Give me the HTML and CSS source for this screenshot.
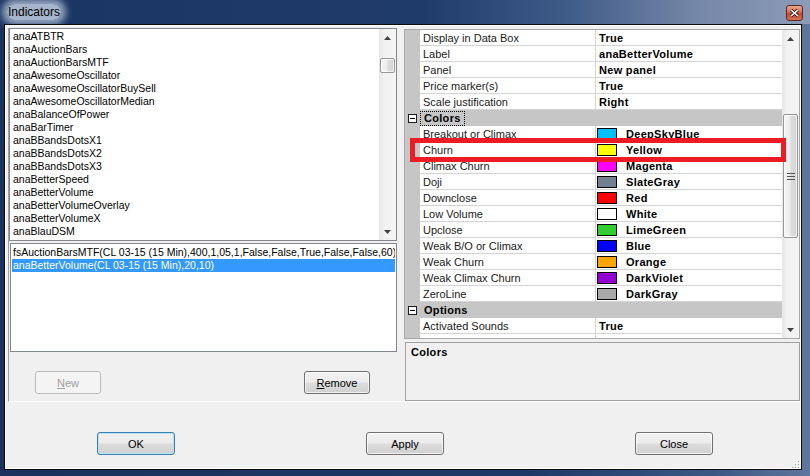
FILE: index.html
```html
<!DOCTYPE html>
<html lang="en">
<head>
    <meta charset="UTF-8">
    <meta name="viewport" content="width=device-width, initial-scale=1.0">
    <title>Indicators</title>
    <link rel="stylesheet" href="styles.css">
</head>
<body>

<div class="window">
    <div class="titlebar">
        <span class="caption">Indicators</span>
        <span class="close-box">
            <svg width="11" height="10" viewBox="0 0 11 10">
                <path d="M2 2l7 6M9 2L2 8" stroke="#3a1a14" stroke-width="3.2"/>
                <path d="M2 2l7 6M9 2L2 8" stroke="#fff" stroke-width="1.6"/>
            </svg>
        </span>
    </div>

    <div class="frame">
        <div class="client">
            <div class="split">

                <!-- Indicator catalogue and the indicators on the chart -->
                <div class="left-pane">
                    <div class="listbox available">
                        <ul class="items">
                            <li>anaATBTR</li>
                            <li>anaAuctionBars</li>
                            <li>anaAuctionBarsMTF</li>
                            <li>anaAwesomeOscillator</li>
                            <li>anaAwesomeOscillatorBuySell</li>
                            <li>anaAwesomeOscillatorMedian</li>
                            <li>anaBalanceOfPower</li>
                            <li>anaBarTimer</li>
                            <li>anaBBandsDotsX1</li>
                            <li>anaBBandsDotsX2</li>
                            <li>anaBBandsDotsX3</li>
                            <li>anaBetterSpeed</li>
                            <li>anaBetterVolume</li>
                            <li>anaBetterVolumeOverlay</li>
                            <li>anaBetterVolumeX</li>
                            <li>anaBlauDSM</li>
                        </ul>
                        <div class="vscroll">
                            <span class="arrow"><svg width="7" height="4"><path d="M0 4h7L3.5 0z" fill="#404040"/></svg></span>
                            <div class="track"><div class="thumb list-thumb"></div></div>
                            <span class="arrow"><svg width="7" height="4"><path d="M0 0h7L3.5 4z" fill="#404040"/></svg></span>
                        </div>
                    </div>

                    <ul class="listbox applied">
                        <li>fsAuctionBarsMTF(CL 03-15 (15 Min),400,1,05,1,False,False,True,False,False,60)</li>
                        <li class="selected">anaBetterVolume(CL 03-15 (15 Min),20,10)</li>
                    </ul>

                    <div class="pane-actions">
                        <button class="btn" disabled><u>N</u>ew</button>
                        <button class="btn"><u>R</u>emove</button>
                    </div>
                </div>

                <!-- Properties of the selected indicator -->
                <div class="right-pane">
                    <div class="propgrid">
                        <div class="rows">
                            <div class="row"><span class="gutter"></span><span class="name">Display in Data Box</span><span class="value">True</span></div>
                            <div class="row"><span class="gutter"></span><span class="name">Label</span><span class="value">anaBetterVolume</span></div>
                            <div class="row"><span class="gutter"></span><span class="name">Panel</span><span class="value">New panel</span></div>
                            <div class="row"><span class="gutter"></span><span class="name">Price marker(s)</span><span class="value">True</span></div>
                            <div class="row"><span class="gutter"></span><span class="name">Scale justification</span><span class="value">Right</span></div>

                            <div class="row category"><span class="toggle"></span><span class="cat-name focused">Colors</span></div>
                            <div class="row"><span class="gutter"></span><span class="name">Breakout or Climax</span><span class="value"><i class="swatch sw-deepskyblue"></i>DeepSkyBlue</span></div>
                            <div class="row"><span class="gutter"></span><span class="name">Churn</span><span class="value"><i class="swatch sw-yellow"></i>Yellow</span></div>
                            <div class="row"><span class="gutter"></span><span class="name">Climax Churn</span><span class="value"><i class="swatch sw-magenta"></i>Magenta</span></div>
                            <div class="row"><span class="gutter"></span><span class="name">Doji</span><span class="value"><i class="swatch sw-slategray"></i>SlateGray</span></div>
                            <div class="row"><span class="gutter"></span><span class="name">Downclose</span><span class="value"><i class="swatch sw-red"></i>Red</span></div>
                            <div class="row"><span class="gutter"></span><span class="name">Low Volume</span><span class="value"><i class="swatch sw-white"></i>White</span></div>
                            <div class="row"><span class="gutter"></span><span class="name">Upclose</span><span class="value"><i class="swatch sw-limegreen"></i>LimeGreen</span></div>
                            <div class="row"><span class="gutter"></span><span class="name">Weak B/O or Climax</span><span class="value"><i class="swatch sw-blue"></i>Blue</span></div>
                            <div class="row"><span class="gutter"></span><span class="name">Weak Churn</span><span class="value"><i class="swatch sw-orange"></i>Orange</span></div>
                            <div class="row"><span class="gutter"></span><span class="name">Weak Climax Churn</span><span class="value"><i class="swatch sw-darkviolet"></i>DarkViolet</span></div>
                            <div class="row"><span class="gutter"></span><span class="name">ZeroLine</span><span class="value"><i class="swatch sw-darkgray"></i>DarkGray</span></div>

                            <div class="row category"><span class="toggle"></span><span class="cat-name">Options</span></div>
                            <div class="row"><span class="gutter"></span><span class="name">Activated Sounds</span><span class="value">True</span></div>
                            <div class="row"><span class="gutter"></span><span class="name"></span><span class="value"></span></div>
                        </div>

                        <div class="vscroll">
                            <span class="arrow"><svg width="7" height="4"><path d="M0 4h7L3.5 0z" fill="#404040"/></svg></span>
                            <div class="track">
                                <div class="thumb grid-thumb">
                                    <svg width="8" height="7"><path d="M0 .5h8M0 3.5h8M0 6.5h8" stroke="#555"/></svg>
                                </div>
                            </div>
                            <span class="arrow"><svg width="7" height="4"><path d="M0 0h7L3.5 4z" fill="#404040"/></svg></span>
                        </div>

                        <!-- red marker round the Churn row -->
                        <div class="callout"></div>
                    </div>

                    <div class="description">Colors</div>
                </div>
            </div>

            <div class="dialog-actions">
                <button class="btn default">OK</button>
                <button class="btn">Apply</button>
                <button class="btn">Close</button>
            </div>

            <span class="size-grip">
                <svg width="8" height="8"><path d="M6 1h1v1H6zM6 4h1v1H6zM3 4h1v1H3zM6 7h1v1H6zM3 7h1v1H3zM0 7h1v1H0z" fill="#a0a0a0"/></svg>
            </span>
        </div>
    </div>
</div>

</body>
</html>
```

FILE: styles.css
```css
* {
    margin: 0;
    padding: 0;
    box-sizing: border-box;
}

body {
    font-family: "Liberation Sans", Arial, sans-serif;
    font-size: 11px;
    color: #000;
    background: #1c3661;
}

ul {
    list-style: none;
}

/* Window chrome */
.window {
    width: 810px;
    height: 476px;
    display: flex;
    flex-direction: column;
    background: linear-gradient(to right, #1a325d 0%, #1d3866 65%, #3b5784 88%, #5f769d 100%);
}

.titlebar {
    height: 24px;
    flex: none;
    display: flex;
    align-items: center;
    justify-content: space-between;
    padding: 0 7px 0 7px;
    background: linear-gradient(to right, #1b3563 0%, #1f3b69 52%, #3f5b88 70%, #7587a8 86%, #8c9bb7 100%);
}

.caption {
    font-size: 12px;
    color: #000;
    padding: 1px 1px;
    background: rgba(190, 203, 222, 0.85);
    border-radius: 8px;
    box-shadow: 0 0 7px 5px rgba(190, 203, 222, 0.75);
}

.close-box {
    width: 17px;
    height: 16px;
    margin-top: 2px;
    display: flex;
    align-items: center;
    justify-content: center;
    border: 1px solid #5a2a22;
    border-radius: 3px;
    background: linear-gradient(#e9a590 0%, #d86a50 45%, #c4462c 55%, #d47357 100%);
}

.frame {
    flex: 1;
    display: flex;
    padding: 0 8px 6px 4px;
}

.client {
    flex: 1;
    position: relative;
    display: flex;
    flex-direction: column;
    padding: 3px 1px 1px 3px;
    border: 1px solid #0b0b0b;
    background: #f0f0f0;
    box-shadow: inset 0 0 0 1px #fff;
}

.split {
    height: 374px;
    display: flex;
    border-left: 1px solid #a0a0a0;
    border-bottom: 1px solid #fdfdfd;
}

/* Left side: list boxes */
.left-pane {
    width: 389px;
    display: flex;
    flex-direction: column;
}

.listbox {
    background: #fff;
    border: 1px solid #828790;
}

.listbox.available {
    width: 388px;
    height: 213px;
    display: flex;
}

.available .items {
    flex: 1;
    padding: 1px 0 0 3px;
    overflow: hidden;
}

.listbox li {
    height: 13px;
    line-height: 13px;
    font-size: 10.5px;
    white-space: nowrap;
    overflow: hidden;
}

.listbox.applied {
    width: 387px;
    height: 109px;
    margin: 2px 0 0 1px;
    padding: 2px 1px 0 1px;
}

.applied li {
    padding-left: 1px;
}

.applied li.selected {
    background: #3399ff;
    color: #fff;
}

.pane-actions {
    margin-top: 19px;
    display: flex;
    justify-content: space-between;
    padding: 0 28px 0 26px;
}

.pane-actions .btn {
    width: 66px;
}

/* Scroll bars */
.vscroll {
    width: 17px;
    flex: none;
    display: flex;
    flex-direction: column;
    background: linear-gradient(to right, #e6e6e6, #f2f2f2 30%, #f4f4f4);
}

.vscroll .arrow {
    height: 17px;
    flex: none;
    display: flex;
    align-items: center;
    justify-content: center;
}

.vscroll .track {
    flex: 1;
    padding: 0 1px;
}

.thumb {
    display: flex;
    align-items: center;
    justify-content: center;
    border: 1px solid #979797;
    border-radius: 2px;
    background: linear-gradient(to right, #f6f6f6 0%, #ececec 45%, #dcdcdc 55%, #d3d3d3 100%);
    box-shadow: inset 0 0 0 1px rgba(255, 255, 255, 0.7);
}

.list-thumb {
    margin-top: 12px;
    height: 15px;
}

.grid-thumb {
    margin-top: 67px;
    height: 124px;
}

/* Right side: property grid */
.right-pane {
    width: 396px;
    margin-left: 6px;
    display: flex;
    flex-direction: column;
}

.propgrid {
    position: relative;
    height: 310px;
    margin-top: 1px;
    display: flex;
    border: 1px solid #a8a8a8;
    background: #fff;
}

.rows {
    flex: 1;
    overflow: hidden;
}

.row {
    height: 16px;
    display: flex;
}

.row .gutter {
    width: 15px;
    flex: none;
    background: #c6c6c6;
}

.row .name,
.row .value {
    display: flex;
    align-items: center;
    border-bottom: 1px solid #d4d4d4;
    white-space: nowrap;
    overflow: hidden;
}

.row .name {
    width: 176px;
    flex: none;
    padding-left: 3px;
    border-right: 1px solid #d4d4d4;
    color: #1a1a1a;
}

.row .value {
    flex: 1;
    padding-left: 3px;
    font-weight: bold;
    letter-spacing: 0.3px;
}

.row.category {
    align-items: center;
    background: #c6c6c6;
}

.toggle {
    position: relative;
    width: 9px;
    height: 9px;
    margin: 0 3px 0 3px;
    border: 1px solid #1e1e1e;
    background: #fff;
}

.toggle::after {
    content: "";
    position: absolute;
    left: 1px;
    top: 3px;
    width: 5px;
    height: 1px;
    background: #000;
}

.cat-name {
    height: 15px;
    line-height: 13px;
    padding: 0 3px;
    font-weight: bold;
    letter-spacing: 0.3px;
    border: 1px solid transparent;
}

.cat-name.focused {
    border: 1px dotted #000;
}

.swatch {
    width: 20px;
    height: 12px;
    margin: 0 9px 0 -2px;
    border: 1px solid #000;
    flex: none;
}

.sw-deepskyblue { background: #00bfff; }
.sw-yellow { background: #ffff00; }
.sw-magenta { background: #ff00ff; }
.sw-slategray { background: #708090; }
.sw-red { background: #ff0000; }
.sw-white { background: #ffffff; }
.sw-limegreen { background: #32cd32; }
.sw-blue { background: #0000ff; }
.sw-orange { background: #ffa500; }
.sw-darkviolet { background: #9400d3; }
.sw-darkgray { background: #a9a9a9; }

.callout {
    position: absolute;
    left: 5px;
    top: 108px;
    width: 376px;
    height: 24px;
    border: 5px solid #ed1c24;
    z-index: 2;
}

.description {
    height: 59px;
    margin: 3px 0 0 1px;
    padding: 3px 5px;
    border: 1px solid #a0a0a0;
    font-weight: bold;
    letter-spacing: 0.3px;
}

/* Buttons */
.dialog-actions {
    flex: 1;
    display: flex;
    align-items: flex-start;
    gap: 191px;
    padding: 30px 0 0 89px;
}

.btn {
    width: 78px;
    height: 23px;
    font-family: "Liberation Sans", Arial, sans-serif;
    font-size: 11px;
    color: #000;
    border: 1px solid #707070;
    border-radius: 3px;
    background: linear-gradient(#f2f2f2 0%, #ebebeb 48%, #dddddd 52%, #cfcfcf 100%);
    box-shadow: inset 0 0 0 1px rgba(255, 255, 255, 0.7);
}

.btn.default {
    border-color: #3c7fb1;
    box-shadow: inset 0 0 0 1px #b6e3f7;
}

.btn:disabled {
    color: #a0a0a0;
    border-color: #bcbcbc;
    background: #f4f4f4;
    box-shadow: none;
}

.size-grip {
    position: absolute;
    right: 1px;
    bottom: 1px;
    width: 8px;
    height: 8px;
    display: flex;
}
```
